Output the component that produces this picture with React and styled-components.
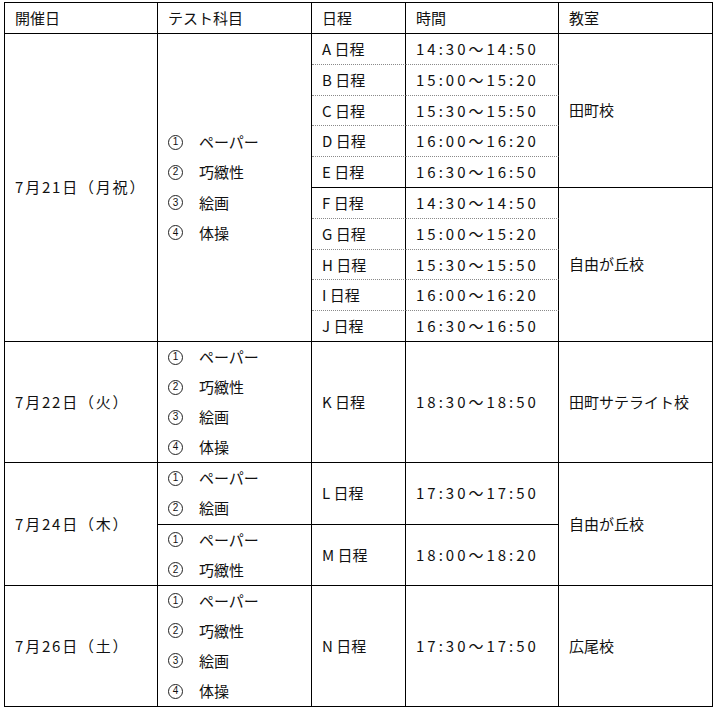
import React from 'react';
import styled, { createGlobalStyle } from 'styled-components';

const Global = createGlobalStyle`
	body {
		margin: 0;
		background: #fff;
		font-family: "Noto Sans CJK JP", "Noto Sans", sans-serif;
		color: #111;
	}
`;

const Page = styled.div`
	padding: 2px 0 0 4px;
`;

const Table = styled.table`
	border-collapse: separate;
	border-spacing: 0;
	width: 708px;
	table-layout: fixed;
	border-top: 1px solid #000;
	border-left: 1px solid #000;
	font-size: 15px;
`;

const Cell = styled.td`
	border-right: 1px solid #000;
	border-bottom: ${(p) => (p.$dotted ? '1px dotted #8a8a8a' : '1px solid #000')};
	padding: 0 10px;
	height: ${(p) => p.$h || 30}px;
	line-height: ${(p) => p.$h || 30}px;
	vertical-align: middle;
	white-space: nowrap;
	letter-spacing: ${(p) => (p.$time ? '3px' : p.$date ? '1.8px' : '0')};
`;

const Head = styled(Cell).attrs({ as: 'th' })`
	font-weight: normal;
	text-align: left;
`;

const SubjectList = styled.div`
	display: flex;
	flex-direction: column;
`;

const Subject = styled.div`
	height: 30.1px;
	display: flex;
	align-items: center;
	gap: 16px;
`;

const Circled = styled.span`
	width: 13px;
	height: 13px;
	border: 1px solid #222;
	border-radius: 50%;
	display: inline-flex;
	align-items: center;
	justify-content: center;
	font-size: 10px;
	line-height: 1;
	font-family: "Liberation Sans", sans-serif;
`;

const cols = [153, 154, 94, 153, 154];

const Subjects = ({ items }) => (
	<SubjectList>
		{items.map((s, i) => (
			<Subject key={i}>
				<Circled>{i + 1}</Circled>
				<span>{s}</span>
			</Subject>
		))}
	</SubjectList>
);

const full = ['ペーパー', '巧緻性', '絵画', '体操'];

const day1 = [
	['A', '14:30～14:50'],
	['B', '15:00～15:20'],
	['C', '15:30～15:50'],
	['D', '16:00～16:20'],
	['E', '16:30～16:50'],
	['F', '14:30～14:50'],
	['G', '15:00～15:20'],
	['H', '15:30～15:50'],
	['I', '16:00～16:20'],
	['J', '16:30～16:50'],
];

export default function App() {
	return (
		<Page>
			<Global />
			<Table>
				<colgroup>
					{cols.map((w, i) => (
						<col key={i} style={{ width: w }} />
					))}
				</colgroup>
				<thead>
					<tr>
						<Head>開催日</Head>
						<Head>テスト科目</Head>
						<Head>日程</Head>
						<Head>時間</Head>
						<Head>教室</Head>
					</tr>
				</thead>
				<tbody>
					{day1.map(([k, t], i) => {
						const dotted = i % 5 !== 4;
						return (
							<tr key={k}>
								{i === 0 && (
									<>
										<Cell rowSpan={10} $date>7月21日（月祝）</Cell>
										<Cell rowSpan={10}>
											<Subjects items={full} />
										</Cell>
									</>
								)}
								<Cell $dotted={dotted} $h={29.8}>{k} 日程</Cell>
								<Cell $dotted={dotted} $h={29.8} $time>{t}</Cell>
								{i === 0 && <Cell rowSpan={5}>田町校</Cell>}
								{i === 5 && <Cell rowSpan={5}>自由が丘校</Cell>}
							</tr>
						);
					})}
					<tr>
						<Cell $date>7月22日（火）</Cell>
						<Cell>
							<Subjects items={full} />
						</Cell>
						<Cell>K 日程</Cell>
						<Cell $time>18:30～18:50</Cell>
						<Cell>田町サテライト校</Cell>
					</tr>
					<tr>
						<Cell rowSpan={2} $date>7月24日（木）</Cell>
						<Cell>
							<Subjects items={['ペーパー', '絵画']} />
						</Cell>
						<Cell>L 日程</Cell>
						<Cell $time>17:30～17:50</Cell>
						<Cell rowSpan={2}>自由が丘校</Cell>
					</tr>
					<tr>
						<Cell>
							<Subjects items={['ペーパー', '巧緻性']} />
						</Cell>
						<Cell>M 日程</Cell>
						<Cell $time>18:00～18:20</Cell>
					</tr>
					<tr>
						<Cell $date>7月26日（土）</Cell>
						<Cell>
							<Subjects items={full} />
						</Cell>
						<Cell>N 日程</Cell>
						<Cell $time>17:30～17:50</Cell>
						<Cell>広尾校</Cell>
					</tr>
				</tbody>
			</Table>
		</Page>
	);
}
